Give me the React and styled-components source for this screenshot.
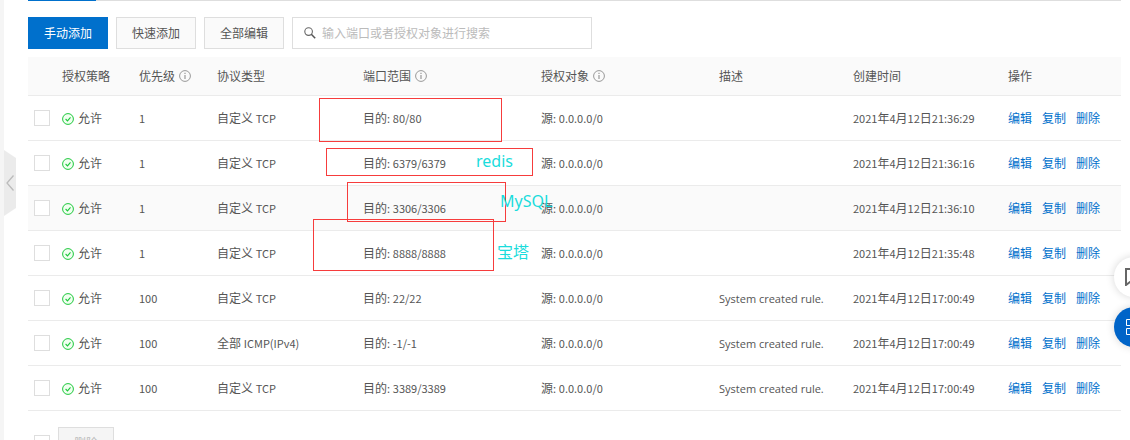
import React, { useState } from "react";
import styled, { createGlobalStyle } from "styled-components";

const GlobalStyle = createGlobalStyle`
    * {
        box-sizing: border-box;
    }

    html {
        scrollbar-width: none;
    }

    body {
        margin: 0;
        overflow-x: hidden;
        background: #fff;
        color: #555;
        font-family: "Noto Sans CJK SC", sans-serif;
        font-size: 12px;
        line-height: 18px;
    }
`;

const Page = styled.div`
    display: flex;
    min-height: 100vh;
`;

const SideStrip = styled.div`
    flex: none;
    width: 4px;
    background: #f5f5f5;
`;

const Content = styled.main`
    flex: 1;
    min-width: 0;
    padding: 0 9px 0 24px;
`;

const TabLine = styled.div`
    height: 1px;
    background: #dedede;
`;

const ActiveTab = styled.div`
    width: 68px;
    height: 1px;
    background: #0070cc;
`;

const Toolbar = styled.div`
    display: flex;
    gap: 8px;
    padding: 16px 0 8px;
`;

const Button = styled.button`
    height: 32px;
    padding: 0 15px;
    border: 1px solid ${({ $primary }) => ($primary ? "#0070cc" : "#dedede")};
    background: ${({ $primary }) => ($primary ? "#0070cc" : "#fafafa")};
    color: ${({ $primary }) => ($primary ? "#fff" : "#555")};
    font: inherit;
    cursor: pointer;

    &:disabled {
        border-color: #dedede;
        background: #f5f5f5;
        color: #bbb;
        cursor: not-allowed;
    }
`;

const SearchBox = styled.label`
    display: flex;
    align-items: center;
    gap: 6px;
    width: 300px;
    height: 32px;
    padding: 0 11px;
    border: 1px solid #dedede;
`;

const SearchInput = styled.input`
    flex: 1;
    min-width: 0;
    padding: 0;
    border: 0;
    outline: none;
    background: transparent;
    color: #555;
    font: inherit;

    &::placeholder {
        color: #bbb;
        opacity: 1;
    }
`;

const TableArea = styled.div`
    position: relative;
`;

const Table = styled.table`
    width: 100%;
    table-layout: fixed;
    border-collapse: separate;
    border-spacing: 0;
`;

const HeadCell = styled.th`
    height: 39px;
    padding: 0 8px;
    border-bottom: 1px solid #ebebeb;
    background: #fafafa;
    color: #555;
    font-weight: 400;
    text-align: left;
    white-space: nowrap;
`;

const Row = styled.tr`
    background: ${({ $active }) => ($active ? "#fafafa" : "#fff")};
`;

const Cell = styled.td`
    height: 45px;
    padding: 0 8px;
    border-bottom: 1px solid #ebebeb;
    white-space: nowrap;
`;

const CheckCell = styled(Cell)`
    padding: 0 0 0 6px;
`;

const Inline = styled.span`
    display: flex;
    align-items: center;
    gap: ${({ $gap }) => $gap}px;
`;

const Latin = styled.span`
    font-size: 11px;
`;

const Description = styled.span`
    font-family: "Open Sans", sans-serif;
    font-size: 11px;
`;

const Checkbox = styled.input`
    display: block;
    appearance: none;
    flex: none;
    width: 16px;
    height: 16px;
    margin: 0;
    border: 1px solid #dedede;
    background: #fff;

    &:checked {
        border-color: #0070cc;
        background: #0070cc;
    }
`;

const Link = styled.a`
    color: #0070cc;
    text-decoration: none;
`;

const Footer = styled.div`
    display: flex;
    align-items: center;
    gap: 8px;
    padding: 16px 6px;
`;

const Mark = styled.div`
    position: absolute;
    left: ${({ $x }) => $x}px;
    top: ${({ $y }) => $y}px;
    width: ${({ $w }) => $w}px;
    height: ${({ $h }) => $h}px;
    border: 1px solid #f63c3c;
    pointer-events: none;
`;

const Note = styled.span`
    position: absolute;
    left: ${({ $x }) => $x}px;
    top: ${({ $y }) => $y}px;
    color: #1adcdc;
    font-family: "Noto Sans", "Noto Sans CJK SC", sans-serif;
    font-size: 16px;
    line-height: 24px;
    pointer-events: none;
`;

const CollapseHandle = styled.button`
    position: fixed;
    left: 4px;
    top: 150px;
    display: flex;
    align-items: center;
    width: 12px;
    height: 66px;
    padding: 0 0 0 2px;
    border: 0;
    background: #ebebeb;
    clip-path: polygon(0 0, 100% 8px, 100% 58px, 0 100%);
    cursor: pointer;
`;

const FloatingBar = styled.div`
    position: fixed;
    right: -24px;
    top: 257px;
    display: flex;
    flex-direction: column;
    gap: 10px;
`;

const RoundButton = styled.button`
    display: flex;
    align-items: center;
    width: 40px;
    height: 40px;
    padding: 0 0 0 11px;
    border: 0;
    border-radius: 50%;
    background: ${({ $primary }) => ($primary ? "#0064c8" : "#fff")};
    color: ${({ $primary }) => ($primary ? "#fff" : "#666")};
    box-shadow: 0 0 8px rgba(0, 0, 0, 0.16);
    cursor: pointer;
`;

const InfoIcon = () => (
    <svg width="12" height="12" viewBox="0 0 12 12" fill="none" aria-hidden="true">
        <circle cx="6" cy="6" r="5.4" stroke="#999" />
        <path d="M6 5v4M6 2.8v1.3" stroke="#999" strokeWidth="1.2" />
    </svg>
);

const AllowIcon = () => (
    <svg width="12" height="14" viewBox="0 0 12 14" fill="none" aria-hidden="true">
        <circle cx="6" cy="8" r="5.4" fill="#f0fff0" stroke="#1ec83c" />
        <path d="M3.6 8l1.9 1.9 3-3.6" stroke="#1ec83c" strokeWidth="1.1" />
    </svg>
);

const SearchIcon = () => (
    <svg width="12" height="12" viewBox="0 0 12 12" fill="none" aria-hidden="true">
        <circle cx="4.6" cy="4.6" r="3.8" stroke="#666" strokeWidth="1.1" />
        <path d="M7.3 7.3l3.9 3.9" stroke="#555" strokeWidth="1.5" />
    </svg>
);

const columns = [
    { title: "", width: 26 },
    { title: "授权策略", width: 77 },
    { title: "优先级", width: 78, info: true },
    { title: "协议类型", width: 146 },
    { title: "端口范围", width: 178, info: true },
    { title: "授权对象", width: 178, info: true },
    { title: "描述", width: 134 },
    { title: "创建时间", width: 155 },
    { title: "操作", width: 121 },
];

const systemRule = "System created rule.";

const rules = [
    { priority: "1", protocol: "自定义 TCP", port: "80/80", desc: "", time: "2021年4月12日21:36:29" },
    { priority: "1", protocol: "自定义 TCP", port: "6379/6379", desc: "", time: "2021年4月12日21:36:16" },
    { priority: "1", protocol: "自定义 TCP", port: "3306/3306", desc: "", time: "2021年4月12日21:36:10", active: true },
    { priority: "1", protocol: "自定义 TCP", port: "8888/8888", desc: "", time: "2021年4月12日21:35:48" },
    { priority: "100", protocol: "自定义 TCP", port: "22/22", desc: systemRule, time: "2021年4月12日17:00:49" },
    { priority: "100", protocol: "全部 ICMP(IPv4)", port: "-1/-1", desc: systemRule, time: "2021年4月12日17:00:49" },
    { priority: "100", protocol: "自定义 TCP", port: "3389/3389", desc: systemRule, time: "2021年4月12日17:00:49" },
];

const marks = [
    { x: 291, y: 41, w: 183, h: 44 },
    { x: 298, y: 91, w: 207, h: 28 },
    { x: 319, y: 125, w: 159, h: 40 },
    { x: 285, y: 162, w: 181, h: 52 },
];

const notes = [
    { x: 448, y: 92, text: "redis" },
    { x: 472, y: 132, text: "MySQL" },
    { x: 469, y: 183, text: "宝塔" },
];

// Chinese characters stay at 12px, digits and latin letters are set smaller
const Mixed = ({ text }) =>
    text
        .split(/([\x21-\x7e]+)/)
        .map((part, i) => (i % 2 ? <Latin key={i}>{part}</Latin> : part));

const RuleRow = ({ rule }) => (
    <Row $active={rule.active}>
        <CheckCell>
            <Checkbox type="checkbox" aria-label={`目的 ${rule.port}`} />
        </CheckCell>
        <Cell>
            <Inline $gap={4}>
                <AllowIcon />
                允许
            </Inline>
        </Cell>
        <Cell><Mixed text={rule.priority} /></Cell>
        <Cell><Mixed text={rule.protocol} /></Cell>
        <Cell><Mixed text={`目的: ${rule.port}`} /></Cell>
        <Cell><Mixed text="源: 0.0.0.0/0" /></Cell>
        <Cell><Description>{rule.desc}</Description></Cell>
        <Cell><Mixed text={rule.time} /></Cell>
        <Cell>
            <Inline $gap={10}>
                <Link href="#edit">编辑</Link>
                <Link href="#copy">复制</Link>
                <Link href="#delete">删除</Link>
            </Inline>
        </Cell>
    </Row>
);

const App = () => {
    const [keyword, setKeyword] = useState("");

    return (
        <Page>
            <GlobalStyle />
            <SideStrip />
            <Content>
                <TabLine>
                    <ActiveTab />
                </TabLine>
                <Toolbar>
                    <Button type="button" $primary>手动添加</Button>
                    <Button type="button">快速添加</Button>
                    <Button type="button">全部编辑</Button>
                    <SearchBox>
                        <SearchIcon />
                        <SearchInput
                            type="text"
                            aria-label="搜索"
                            placeholder="输入端口或者授权对象进行搜索"
                            value={keyword}
                            onChange={(e) => setKeyword(e.target.value)}
                        />
                    </SearchBox>
                </Toolbar>
                <TableArea>
                    <Table>
                        <colgroup>
                            {columns.map((col) => (
                                <col key={col.title} width={col.width} />
                            ))}
                        </colgroup>
                        <thead>
                            <tr>
                                {columns.map((col) => (
                                    <HeadCell key={col.title}>
                                        <Inline $gap={4}>
                                            {col.title}
                                            {col.info && <InfoIcon />}
                                        </Inline>
                                    </HeadCell>
                                ))}
                            </tr>
                        </thead>
                        <tbody>
                            {rules.map((rule) => (
                                <RuleRow key={rule.port} rule={rule} />
                            ))}
                        </tbody>
                    </Table>
                    {marks.map((m) => (
                        <Mark key={m.y} $x={m.x} $y={m.y} $w={m.w} $h={m.h} />
                    ))}
                    {notes.map((n) => (
                        <Note key={n.text} $x={n.x} $y={n.y}>{n.text}</Note>
                    ))}
                </TableArea>
                <Footer>
                    <Checkbox type="checkbox" aria-label="全选" />
                    <Button type="button" disabled>删除</Button>
                </Footer>
            </Content>
            <CollapseHandle type="button" aria-label="收起">
                <svg width="8" height="16" viewBox="0 0 8 16" fill="none">
                    <path d="M7.5 0.5L1 8l6.5 7.5" stroke="#bbb" strokeWidth="1.3" />
                </svg>
            </CollapseHandle>
            <FloatingBar>
                <RoundButton type="button" aria-label="咨询">
                    <svg width="18" height="18" viewBox="0 0 18 18" fill="none">
                        <path d="M1 1h16v13H5l-4 3V1z" stroke="currentColor" strokeWidth="2" />
                    </svg>
                </RoundButton>
                <RoundButton type="button" aria-label="应用" $primary>
                    <svg width="18" height="18" viewBox="0 0 18 18" fill="none">
                        <path d="M1.5 1.5h6v6h-6zM10.5 1.5h6v6h-6zM1.5 10.5h6v6h-6zM10.5 10.5h6v6h-6z" stroke="currentColor" />
                    </svg>
                </RoundButton>
            </FloatingBar>
        </Page>
    );
};

export default App;
